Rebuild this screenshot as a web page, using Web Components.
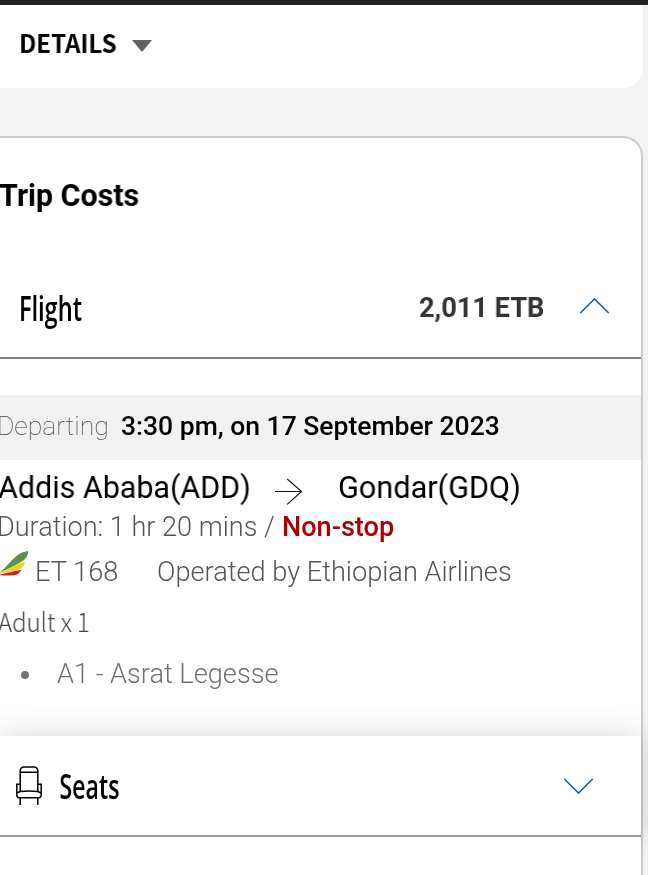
<!DOCTYPE html>
<html lang="en"><head><meta charset="utf-8"><title>Trip Costs</title>
<style>html,body{margin:0;height:875px;overflow:hidden;background:#f3f3f3}</style></head>
<body><trip-page></trip-page>
<script>
// Single-line label whose glyphs are fitted to an exact visible width.
class FitText extends HTMLElement{
  connectedCallback(){
    const g=n=>this.getAttribute(n);
    const w=+g('w'),size=+g('size'),weight=g('weight')||400;
    const family=g('face')==='source'?'"Noto Sans CJK SC", sans-serif':g('face')==='narrow'?'"Open Sans", sans-serif':'Roboto, sans-serif';
    const root=this.attachShadow({mode:'open'});
    root.innerHTML=`<style>:host{display:block;flex:none;width:${w}px;height:${size}px;margin-top:${g('top')||0}px;color:${g('color')||'#000'}}
    span{display:inline-block;white-space:pre;font:${weight} ${size}px/${size}px ${family};transform-origin:0 0;will-change:transform}</style><span><slot></slot></span>`;
    const c=document.createElement('canvas').getContext('2d');
    c.font=`${weight} ${size}px ${family}`;
    const m=c.measureText(this.textContent),l=m.actualBoundingBoxLeft,s=w/(l+m.actualBoundingBoxRight);
    root.querySelector('span').style.transform=`translateX(${l*s}px) scaleX(${s})`;
  }
}
customElements.define('fit-text',FitText);

const define=(name,html)=>customElements.define(name,class extends HTMLElement{
  constructor(){super();this.attachShadow({mode:'open'}).innerHTML=html}
});

define('chevron-icon',`<style>:host{display:block;width:30px;height:16px}:host([down]){transform:scaleY(-1)}svg{display:block}</style>
<svg width="30" height="16" viewBox="0 0 30 16"><path d="M.3 15 14.5 .9 28.7 15" fill="none" stroke="#15608a" stroke-width="1.5"/></svg>`);

define('arrow-icon',`<style>:host{display:block}svg{display:block}</style>
<svg width="28" height="28" viewBox="0 0 28 28"><path d="M0 14.5H27M12.2 2 26.6 14.5 12.2 27.3" fill="none" stroke="#111" stroke-width="1.1"/></svg>`);

define('airline-logo',`<style>:host{display:block}svg{display:block}</style>
<svg width="28" height="27" viewBox="0 0 28 27"><path d="M-2 23.5C8 18 14 2.5 28 1Q28.5 7 22 11.5 13 17-2 23.5Z" fill="#5c9448"/><path d="M-2 24.2C9 20 14 14.5 25 12Q24 17.5 18 19.5 10 22-2 24.2Z" fill="#fcce10"/><path d="M-2 25C7 23 12 21.5 21 20Q19.5 24.5 14 25.3 7 26-2 25Z" fill="#c9202c"/></svg>`);

define('seat-icon',`<style>:host{display:block}svg{display:block}</style>
<svg width="26" height="40" viewBox="0 0 26 40"><g fill="none" stroke="#000" stroke-width="1.5"><path d="M4.2 25V5Q4.2.9 8.5.9h9Q21.8.9 21.8 5v20M4.2 6.2H21.8M4.2 18.2H.8V29Q.8 31.7 3.3 31.7H22.7Q25.2 31.7 25.2 29V18.2H21.8M.9 27 4.2 25.6Q13 24.4 21.8 25.6L25.1 27M4.2 32V39M21.8 32V39"/></g></svg>`);

define('details-bar',`<style>:host{display:flex;box-sizing:border-box;width:643px;height:83px;padding:0 0 0 21px;background:#fff;border-radius:0 0 20px 0;gap:16px}svg{margin-top:35px}</style>
<fit-text face="source" size="25" weight="700" w="95" top="24.5">DETAILS</fit-text>
<svg width="20" height="12" viewBox="0 0 20 12"><path d="M0 0H20L10 12Z" fill="#606060"/></svg>`);

define('cost-row',`<style>:host{display:flex;box-sizing:border-box;height:101px;width:641px;border-bottom:2px solid #828282;background:#fff}
:host([seats]){border-color:#9c9c9c;box-shadow:0 0 30px rgba(0,0,0,.16)}</style><slot></slot>`);

define('flight-leg',`<style>
:host{display:flow-root;width:641px;height:377px}
div{display:flex}
.date{margin-top:36px;height:65px;background:#f1f1f1;gap:14px}
.route{height:50px}.route arrow-icon{margin:17px 0 0 26px}.route fit-text:last-child{margin-left:36px}
.duration{height:34px;gap:9px}.flight{height:54px}.flight airline-logo{margin-top:6px}
.adult{height:50px}.passenger{height:50px}
i{width:8px;height:8px;margin:23px 28px 0 21px;background:#757575;border-radius:50%}
</style>
<div class="date"><fit-text size="26" weight="100" color="#444" w="108.5" top="18" style="margin-left:-1px">Departing</fit-text><fit-text size="26" weight="500" w="378" top="18" style="margin-left:-.5px">3:30 pm, on 17 September 2023</fit-text></div>
<div class="route"><fit-text size="31" w="251" top="12" style="margin-left:-2px">Addis Ababa(ADD)</fit-text><arrow-icon></arrow-icon><fit-text size="31" w="180" top="12">Gondar(GDQ)</fit-text></div>
<div class="duration"><fit-text size="27" weight="300" color="#555" w="275" top="4" style="margin-left:-1px">Duration: 1 hr 20 mins /</fit-text><fit-text size="27" weight="500" color="#a90000" w="111" top="4">Non-stop</fit-text></div>
<div class="flight"><airline-logo></airline-logo><fit-text size="27" weight="300" color="#555" w="81" top="15" style="margin-left:9px">ET 168</fit-text><fit-text size="27" weight="300" color="#555" w="353" top="15" style="margin-left:40px">Operated by Ethiopian Airlines</fit-text></div>
<div class="adult"><fit-text face="source" size="26" weight="300" color="#444" w="91" top="9.5" style="margin-left:-2px">Adult x 1</fit-text></div>
<div class="passenger"><i></i><fit-text size="27" weight="300" color="#707070" w="220.5" top="13">A1 - Asrat Legesse</fit-text></div>`);

define('trip-card',`<style>:host{display:block;box-sizing:border-box;width:643px;height:760px;border:solid #ccc;border-width:2px 2px 0 0;border-radius:0 20px 0 0;background:#fff}
.title{height:120px;display:flex}.rest{position:relative;height:38px;background:#fff}</style>
<div class="title"><fit-text size="30.5" weight="700" w="139.5" top="43" style="margin-left:-1.5px">Trip Costs</fit-text></div>
<cost-row><fit-text face="narrow" size="34.5" weight="600" w="60.5" top="33" style="margin-left:20.5px">Flight</fit-text><fit-text size="28" weight="700" color="#333" w="124.5" top="36" style="margin-left:338px">2,011 ETB</fit-text><chevron-icon style="margin:40px 0 0 36.5px"></chevron-icon></cost-row>
<flight-leg></flight-leg>
<cost-row seats><seat-icon style="margin:30px 0 0 16px"></seat-icon><fit-text face="narrow" size="34.5" weight="600" w="59" top="32.5" style="margin-left:18px">Seats</fit-text><chevron-icon down style="margin:42px 0 0 445px"></chevron-icon></cost-row><div class="rest"></div>`);

define('trip-page',`<style>:host{display:flex;flex-direction:column;width:648px;height:875px;overflow:hidden;background:#f3f3f3}header{height:5px;background:#222;flex:none}details-bar{flex:none}trip-card{margin-top:48px;flex:none}</style>
<header></header><details-bar></details-bar><trip-card></trip-card>`);
</script></body></html>
